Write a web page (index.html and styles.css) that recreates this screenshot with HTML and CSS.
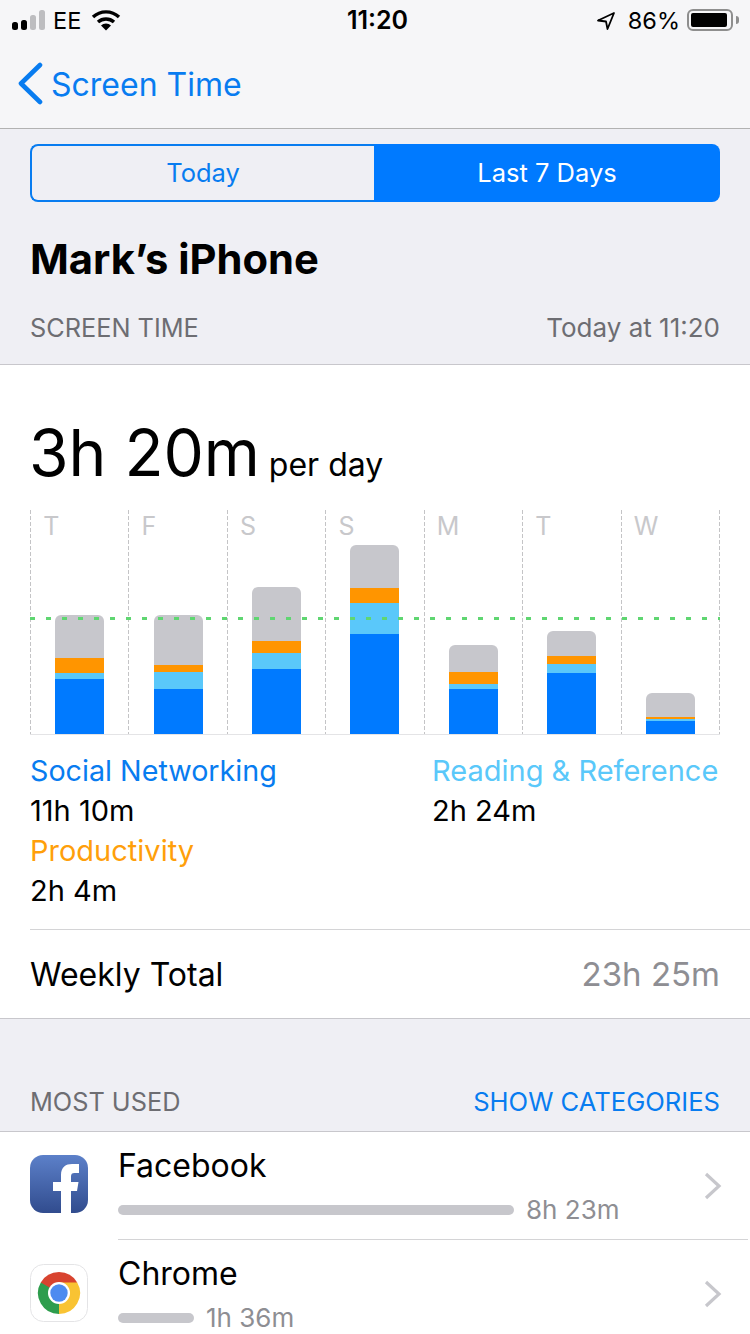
FILE: index.html
```html
<!DOCTYPE html>
<html>
<head>
    <link rel="stylesheet" href="styles.css">
</head>
<body>
    <div class="top">
        <div class="status">
            <div class="status-left">
                <svg class="signal" width="34" height="22" viewBox="0 0 34 22">
                    <rect x="0" y="13" width="6" height="8" rx="2.5" fill="#000"/>
                    <rect x="9" y="11" width="6" height="10" rx="2.5" fill="#000"/>
                    <rect x="18" y="6" width="6" height="15" rx="2.5" fill="#bdbdc0"/>
                    <rect x="27" y="1" width="6" height="20" rx="2.5" fill="#bdbdc0"/>
                </svg>
                <span class="carrier">EE</span>
                <svg class="wifi" width="30" height="22" viewBox="0 0 30 22">
                    <path d="M2 8 A19 19 0 0 1 28 8" fill="none" stroke="#000" stroke-width="3.4"/>
                    <path d="M7 13 A12 12 0 0 1 23 13" fill="none" stroke="#000" stroke-width="3.4"/>
                    <path d="M10 16.5 A7 7 0 0 1 20 16.5 L15 21.5 Z" fill="#000"/>
                </svg>
            </div>
            <div class="clock">11:20</div>
            <div class="status-right">
                <svg class="arrow" width="20" height="20" viewBox="0 0 20 20">
                    <path d="M18 2 L2 9.5 L10 10.5 L11.5 18 Z" fill="none" stroke="#000" stroke-width="1.8" stroke-linejoin="round"/>
                </svg>
                <span class="percent">86%</span>
                <div class="battery"><div class="battery-fill"></div></div>
                <div class="battery-tip"></div>
            </div>
        </div>
        <div class="nav">
            <svg class="back" width="26" height="44" viewBox="0 0 26 44">
                <path d="M23 3 L4 21.5 L23 40" fill="none" stroke="#087cf0" stroke-width="4.6" stroke-linecap="round" stroke-linejoin="round"/>
            </svg>
            <span class="nav-title">Screen Time</span>
        </div>
    </div>

    <div class="segment">
        <div class="seg seg-off">Today</div>
        <div class="seg seg-on">Last 7 Days</div>
    </div>

    <h1>Mark’s iPhone</h1>

    <div class="section-head head-first">
        <span>SCREEN TIME</span>
        <span class="stamp">Today at 11:20</span>
    </div>

    <div class="card">
        <div class="average"><span class="avg-big">3h 20m</span><span class="avg-small">per day</span></div>

        <div class="chart">
            <div class="day">
                <span class="day-name">T</span>
                <div class="bar">
                    <div class="gray" style="height:43px"></div>
                    <div class="orange" style="height:15px"></div>
                    <div class="light" style="height:6px"></div>
                    <div class="blue" style="height:55px"></div>
                </div>
            </div>
            <div class="day">
                <span class="day-name">F</span>
                <div class="bar">
                    <div class="gray" style="height:50px"></div>
                    <div class="orange" style="height:7px"></div>
                    <div class="light" style="height:17px"></div>
                    <div class="blue" style="height:45px"></div>
                </div>
            </div>
            <div class="day">
                <span class="day-name">S</span>
                <div class="bar">
                    <div class="gray" style="height:54px"></div>
                    <div class="orange" style="height:12px"></div>
                    <div class="light" style="height:16px"></div>
                    <div class="blue" style="height:65px"></div>
                </div>
            </div>
            <div class="day">
                <span class="day-name">S</span>
                <div class="bar">
                    <div class="gray" style="height:43px"></div>
                    <div class="orange" style="height:15px"></div>
                    <div class="light" style="height:31px"></div>
                    <div class="blue" style="height:100px"></div>
                </div>
            </div>
            <div class="day">
                <span class="day-name">M</span>
                <div class="bar">
                    <div class="gray" style="height:27px"></div>
                    <div class="orange" style="height:12px"></div>
                    <div class="light" style="height:5px"></div>
                    <div class="blue" style="height:45px"></div>
                </div>
            </div>
            <div class="day">
                <span class="day-name">T</span>
                <div class="bar">
                    <div class="gray" style="height:25px"></div>
                    <div class="orange" style="height:8px"></div>
                    <div class="light" style="height:9px"></div>
                    <div class="blue" style="height:61px"></div>
                </div>
            </div>
            <div class="day">
                <span class="day-name">W</span>
                <div class="bar">
                    <div class="gray" style="height:24px"></div>
                    <div class="orange" style="height:2px"></div>
                    <div class="light" style="height:2px"></div>
                    <div class="blue" style="height:13px"></div>
                </div>
            </div>
            <div class="average-line"></div>
        </div>

        <div class="legend">
            <div class="legend-col">
                <div class="text-blue">Social Networking</div>
                <div>11h 10m</div>
                <div class="text-orange">Productivity</div>
                <div>2h 4m</div>
            </div>
            <div class="legend-col">
                <div class="text-light">Reading &amp; Reference</div>
                <div>2h 24m</div>
            </div>
        </div>

        <div class="total">
            <span>Weekly Total</span>
            <span class="total-value">23h 25m</span>
        </div>
    </div>

    <div class="section-head head-used">
        <span>MOST USED</span>
        <span class="link">SHOW CATEGORIES</span>
    </div>

    <div class="list">
        <div class="row">
            <svg class="app-icon" width="58" height="58" viewBox="0 0 58 58">
                <defs>
                    <linearGradient id="fb" x1="0" y1="0" x2="0" y2="1">
                        <stop offset="0" stop-color="#5c80c9"/>
                        <stop offset="1" stop-color="#314c8e"/>
                    </linearGradient>
                </defs>
                <rect width="58" height="58" rx="13" fill="url(#fb)"/>
                <path d="M31 58 V36 H23 V27 H31 V20 C31 12 36 9 42 9 H49 V18 H44.500 C42 18 41 19 41 21.500 V27 H48.500 L47 36 H41 V58 Z" fill="#fff"/>
            </svg>
            <div class="row-body">
                <div class="app-name">Facebook</div>
                <div class="usage">
                    <div class="usage-bar" style="width:396px"></div>
                    <span class="usage-time">8h 23m</span>
                </div>
            </div>
            <svg class="chevron" width="18" height="28" viewBox="0 0 18 28">
                <path d="M2 2 L15 14 L2 26" fill="none" stroke="#c7c7cc" stroke-width="3.2"/>
            </svg>
        </div>
        <div class="row">
            <svg class="app-icon" width="58" height="58" viewBox="0 0 58 58">
                <rect x="0.500" y="0.500" width="57" height="57" rx="13" fill="#fff" stroke="#e4e4e6"/>
                <path d="M47.200 18.500 A21 21 0 0 0 10.800 18.500 L19.900 34.200 L29 29 Z" fill="#d8432f"/>
                <path d="M10.800 18.500 A21 21 0 0 0 29 50 L38.100 34.200 L29 29 Z" fill="#2e9d4d"/>
                <path d="M29 50 A21 21 0 0 0 47.200 18.500 L29 18.500 L29 29 Z" fill="#f9c333"/>
                <circle cx="29" cy="29" r="11" fill="#fff"/>
                <circle cx="29" cy="29" r="8.700" fill="#4d8bf0"/>
            </svg>
            <div class="row-body">
                <div class="app-name">Chrome</div>
                <div class="usage">
                    <div class="usage-bar" style="width:76px"></div>
                    <span class="usage-time">1h 36m</span>
                </div>
            </div>
            <svg class="chevron" width="18" height="28" viewBox="0 0 18 28">
                <path d="M2 2 L15 14 L2 26" fill="none" stroke="#c7c7cc" stroke-width="3.2"/>
            </svg>
        </div>
    </div>
</body>
</html>
```

FILE: styles.css
```css
html, body {
    margin: 0;
    height: 1334px;
    overflow: hidden;
}
body {
    font-family: "Inter", "Liberation Sans", sans-serif;
    background: #efeff4;
    color: #000;
}

.top {
    height: 128px;
    background: #f6f6f8;
    border-bottom: 1px solid #b2b2b2;
}
.status {
    height: 40px;
    display: flex;
    align-items: center;
    justify-content: space-between;
    padding: 0 11px 0 12px;
    font-size: 23.5px;
}
.status-left, .status-right {
    flex: 1;
    display: flex;
    align-items: center;
}
.status-right {
    justify-content: flex-end;
}
.signal {
    margin-right: 7px;
}
.wifi {
    margin-left: 10px;
}
.clock {
    margin-left: 4px;
    font-size: 25px;
    font-weight: 600;
}
.percent {
    margin: 0 7px 0 12px;
}
.arrow {
    margin-top: 2px;
}
.battery {
    width: 46px;
    height: 22px;
    box-sizing: border-box;
    border: 2px solid #8e8e8e;
    border-radius: 6px;
    padding: 2px;
}
.battery-fill {
    width: 36px;
    height: 14px;
    background: #000;
    border-radius: 2px;
}
.battery-tip {
    width: 3px;
    height: 8px;
    margin-left: 3px;
    background: #8e8e8e;
    border-radius: 0 3px 3px 0;
}
.nav {
    height: 88px;
    display: flex;
    align-items: center;
    padding-left: 17px;
    color: #087cf0;
}
.back {
    margin-right: 8px;
}
.nav-title {
    font-size: 32px;
}

.segment {
    display: flex;
    margin: 15px 30px 0;
    height: 58px;
    font-size: 25.5px;
}
.seg {
    display: flex;
    align-items: center;
    justify-content: center;
    box-sizing: border-box;
    padding-bottom: 2px;
}
.seg-off {
    width: 344px;
    color: #087cf0;
    border: 2px solid #087cf0;
    border-right: none;
    border-radius: 8px 0 0 8px;
}
.seg-on {
    flex: 1;
    color: #fff;
    background: #007aff;
    border-radius: 0 8px 8px 0;
}

h1 {
    margin: 32px 0 0 30px;
    font-size: 41.7px;
    line-height: 50px;
    font-weight: 700;
}

.section-head {
    display: flex;
    justify-content: space-between;
    padding: 0 30px;
    font-size: 25.3px;
    line-height: 30px;
    color: #6d6d72;
}
.head-first {
    margin-top: 29px;
    padding-bottom: 21px;
}
.head-used {
    padding-top: 68px;
    padding-bottom: 14px;
}
.stamp {
    font-size: 26px;
}
.link {
    font-size: 25.6px;
    color: #087cf0;
}

.card {
    background: #fff;
    border-top: 1px solid #c8c7cc;
    border-bottom: 1px solid #c8c7cc;
    padding-left: 30px;
}
.average {
    padding-top: 43px;
    line-height: 90px;
    height: 102px;
    white-space: nowrap;
}
.avg-big {
    font-size: 64px;
    margin-left: -1px;
}
.avg-small {
    font-size: 32px;
    margin-left: 9px;
}

.chart {
    position: relative;
    display: grid;
    grid-template-columns: repeat(7, 1fr);
    box-sizing: border-box;
    width: 690px;
    height: 225px;
    padding-right: 1px;
    border-bottom: 1px solid #e4e4e6;
    background: repeating-linear-gradient(180deg, #c4c4c6 0, #c4c4c6 4px, transparent 4px, transparent 6px) right top / 1px 100% no-repeat;
}
.day {
    display: flex;
    flex-direction: column;
    padding-left: 25.15px;
    background: repeating-linear-gradient(180deg, #c4c4c6 0, #c4c4c6 4px, transparent 4px, transparent 6px) left top / 1px 100% no-repeat;
}
.day-name {
    margin: 1px 0 0 -12px;
    font-size: 25px;
    line-height: 30px;
    color: #c8c8cb;
}
.bar {
    margin-top: auto;
    width: 49px;
    border-radius: 6px 6px 0 0;
    overflow: hidden;
}
.gray {
    background: #c7c7cc;
}
.orange {
    background: #ff9500;
}
.light {
    background: #5ac8fa;
}
.blue {
    background: #007aff;
}
.average-line {
    position: absolute;
    left: 0;
    right: 0;
    top: 107px;
    height: 3px;
    background: repeating-linear-gradient(90deg, #5fd671 0, #5fd671 5px, transparent 5px, transparent 16px);
}

.legend {
    display: grid;
    grid-template-columns: 402px 1fr;
    padding: 16px 0 18px;
    font-size: 29px;
    line-height: 40px;
}
.text-blue {
    font-size: 28.7px;
    color: #087cf0;
}
.text-orange {
    color: #ff9f0a;
}
.text-light {
    color: #5ac8fa;
}

.total {
    display: flex;
    justify-content: space-between;
    align-items: center;
    height: 88px;
    padding-right: 30px;
    border-top: 1px solid #d4d4d6;
    font-size: 32px;
}
.total-value {
    font-size: 33px;
    color: #8e8e93;
}

.list {
    background: #fff;
    border-top: 1px solid #c8c7cc;
    padding-left: 30px;
}
.row {
    display: flex;
    align-items: center;
    height: 108px;
}
.app-icon {
    flex: none;
    margin: 0 30px 3px 0;
}
.row:first-child .app-icon {
    margin-bottom: 5px;
}
.row-body {
    flex: 1;
    align-self: stretch;
    border-bottom: 1px solid #d4d4d6;
    padding-top: 13px;
    box-sizing: border-box;
}
.app-name {
    font-size: 32px;
    line-height: 42px;
}
.usage {
    display: flex;
    align-items: center;
    height: 30px;
    margin-top: 7px;
}
.usage-bar {
    height: 10px;
    margin-top: 2px;
    background: #c7c7cc;
    border-radius: 5px;
}
.usage-time {
    margin-left: 12px;
    font-size: 26px;
    color: #8e8e93;
}
.chevron {
    flex: none;
    margin: 0 28px 0 -44px;
}
```
